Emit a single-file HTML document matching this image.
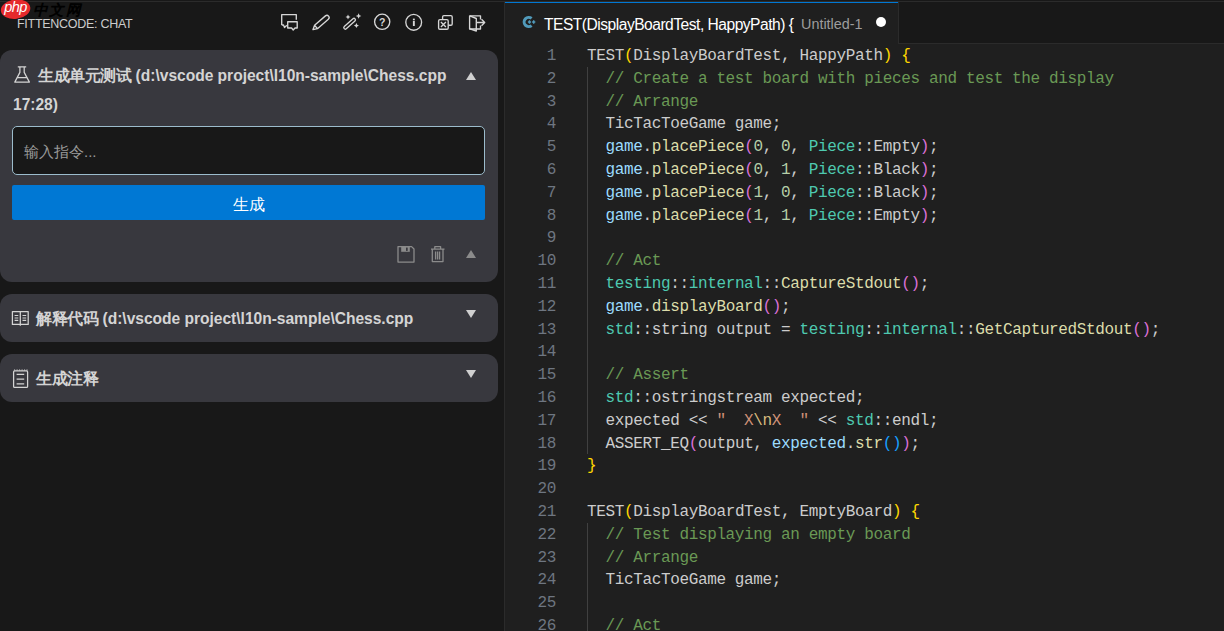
<!DOCTYPE html>
<html><head><meta charset="utf-8">
<style>
*{margin:0;padding:0;box-sizing:border-box}
html,body{width:1224px;height:631px;overflow:hidden;background:#181818}
body{position:relative;font-family:"Liberation Sans",sans-serif}
.abs{position:absolute}
#topline{left:0;top:1px;width:1224px;height:1px;background:#2b2b2b}
#sidebar{left:0;top:0;width:504px;height:631px;background:#181818}
#sbborder{left:504px;top:2px;width:1px;height:629px;background:#2b2b2b}
#hdr{left:17px;top:16.5px;font-size:12.5px;color:#cccccc;white-space:nowrap;letter-spacing:-0.28px}
.ic{position:absolute;top:12px;width:20px;height:20px}
.panel{position:absolute;left:0;width:498px;background:#38383e;border-radius:12px}
.cj{letter-spacing:-0.45px}
.ptitle{position:absolute;left:38px;font-size:15.6px;font-weight:bold;letter-spacing:-0.03px;color:#d4d4d4;white-space:nowrap;line-height:28px}
.tri{position:absolute;width:0;height:0;border-left:5.2px solid transparent;border-right:5.2px solid transparent}
.up{border-bottom:8.5px solid #d0d0d0}
.down{border-top:8.5px solid #d0d0d0}
#input{left:12px;top:126px;width:473px;height:49px;border:1px solid #9cbccc;border-radius:5px;background:#181818}
#ph{left:24px;top:143px;font-size:15px;color:#9a9a9a;white-space:nowrap}
#btn{left:12px;top:185px;width:473px;height:35px;background:#0078d4;border-radius:2px;color:#fff;font-size:15.6px;text-align:center;line-height:35px;padding-top:1.5px}
/* editor */
#editor{left:505px;top:44px;width:719px;height:587px;background:#1f1f1f}
#tabbar{left:505px;top:2px;width:719px;height:42px;background:#181818}
#tabbarb{left:898px;top:43px;width:326px;height:1px;background:#2b2b2b}
#tab{left:505px;top:2px;width:393px;height:42px;background:#1f1f1f;border-top:1px solid #0078d4}
#tabr{left:898px;top:2px;width:1px;height:42px;background:#2b2b2b}
#tabtitle{left:544px;top:15.5px;font-size:15.6px;color:#ffffff;white-space:nowrap;letter-spacing:-0.5px}
#untitled{left:801px;top:16px;font-size:14.4px;color:#9d9d9d;white-space:nowrap}
#dot{left:876px;top:17.2px;width:10px;height:10px;border-radius:50%;background:#ffffff}
#code{left:505px;top:45px;font-family:"Liberation Mono",monospace;font-size:16px;letter-spacing:-0.36px;line-height:22.8px;white-space:pre;color:#cccccc}
.ln{position:absolute;left:0;width:51px;text-align:right;color:#6e7681}
.cl{position:absolute;left:82px}
#guide1{left:587px;top:67px;width:1px;height:387px;background:#404040}
#guide2{left:587px;top:523px;width:1px;height:108px;background:#404040}
.c{color:#6a9955}.f{color:#dcdcaa}.t{color:#4ec9b0}.v{color:#9cdcfe}.n{color:#b5cea8}.s{color:#ce9178}.e{color:#d7ba7d}
.b1{color:#ffd700}.b2{color:#da70d6}.b3{color:#179fff}
</style></head><body>
<div id="sidebar" class="abs"></div>
<div id="topline" class="abs"></div>
<div id="sbborder" class="abs"></div>

<div id="hdr" class="abs">FITTENCODE: CHAT</div>

<!-- panel 1 -->
<div class="panel" style="top:50px;height:232px"></div>
<div class="ptitle" style="top:61.5px"><span class="cj">生成单元测试</span> (d:\vscode project\l10n-sample\Chess.cpp</div>
<div class="ptitle" style="top:91px;left:13px">17:28)</div>
<div class="tri up" style="left:465.6px;top:71.5px"></div>
<div id="input" class="abs"></div>
<div id="ph" class="abs">输入指令...</div>
<div id="btn" class="abs">生成</div>
<div class="tri up" style="left:465.6px;top:249.5px;border-bottom-color:#8b8b8b"></div>

<!-- panel 2 -->
<div class="panel" style="top:294px;height:48px"></div>
<div class="ptitle" style="top:305px;left:36px"><span class="cj">解释代码</span> (d:\vscode project\l10n-sample\Chess.cpp</div>
<div class="tri down" style="left:465.6px;top:310px"></div>

<!-- panel 3 -->
<div class="panel" style="top:354px;height:48px"></div>
<div class="ptitle" style="top:365px;left:36px"><span class="cj">生成注释</span></div>
<div class="tri down" style="left:465.6px;top:370px"></div>

<!-- editor -->
<div id="tabbar" class="abs"></div>
<div id="tabbarb" class="abs"></div>
<div id="editor" class="abs"></div>
<div id="tab" class="abs"></div>
<div id="tabr" class="abs"></div>
<div id="tabtitle" class="abs">TEST(DisplayBoardTest, HappyPath) {</div>
<div id="untitled" class="abs">Untitled-1</div>
<div id="dot" class="abs"></div>

<div id="guide1" class="abs"></div>
<div id="guide2" class="abs"></div>
<div id="code" class="abs">
<div class="ln" style="top:0.0px">1</div><div class="cl" style="top:0.0px">TEST<span class="b1">(</span>DisplayBoardTest, HappyPath<span class="b1">)</span> <span class="b1">{</span></div>
<div class="ln" style="top:22.8px">2</div><div class="cl" style="top:22.8px">  <span class="c">// Create a test board with pieces and test the display</span></div>
<div class="ln" style="top:45.6px">3</div><div class="cl" style="top:45.6px">  <span class="c">// Arrange</span></div>
<div class="ln" style="top:68.4px">4</div><div class="cl" style="top:68.4px">  TicTacToeGame game;</div>
<div class="ln" style="top:91.2px">5</div><div class="cl" style="top:91.2px">  <span class="v">game</span>.<span class="f">placePiece</span><span class="b2">(</span><span class="n">0</span>, <span class="n">0</span>, <span class="t">Piece</span>::Empty<span class="b2">)</span>;</div>
<div class="ln" style="top:114.0px">6</div><div class="cl" style="top:114.0px">  <span class="v">game</span>.<span class="f">placePiece</span><span class="b2">(</span><span class="n">0</span>, <span class="n">1</span>, <span class="t">Piece</span>::Black<span class="b2">)</span>;</div>
<div class="ln" style="top:136.8px">7</div><div class="cl" style="top:136.8px">  <span class="v">game</span>.<span class="f">placePiece</span><span class="b2">(</span><span class="n">1</span>, <span class="n">0</span>, <span class="t">Piece</span>::Black<span class="b2">)</span>;</div>
<div class="ln" style="top:159.6px">8</div><div class="cl" style="top:159.6px">  <span class="v">game</span>.<span class="f">placePiece</span><span class="b2">(</span><span class="n">1</span>, <span class="n">1</span>, <span class="t">Piece</span>::Empty<span class="b2">)</span>;</div>
<div class="ln" style="top:182.4px">9</div><div class="cl" style="top:182.4px"></div>
<div class="ln" style="top:205.2px">10</div><div class="cl" style="top:205.2px">  <span class="c">// Act</span></div>
<div class="ln" style="top:228.0px">11</div><div class="cl" style="top:228.0px">  <span class="t">testing</span>::<span class="t">internal</span>::<span class="f">CaptureStdout</span><span class="b2">()</span>;</div>
<div class="ln" style="top:250.8px">12</div><div class="cl" style="top:250.8px">  <span class="v">game</span>.<span class="f">displayBoard</span><span class="b2">()</span>;</div>
<div class="ln" style="top:273.6px">13</div><div class="cl" style="top:273.6px">  <span class="t">std</span>::string output = <span class="t">testing</span>::<span class="t">internal</span>::<span class="f">GetCapturedStdout</span><span class="b2">()</span>;</div>
<div class="ln" style="top:296.4px">14</div><div class="cl" style="top:296.4px"></div>
<div class="ln" style="top:319.2px">15</div><div class="cl" style="top:319.2px">  <span class="c">// Assert</span></div>
<div class="ln" style="top:342.0px">16</div><div class="cl" style="top:342.0px">  <span class="t">std</span>::ostringstream expected;</div>
<div class="ln" style="top:364.8px">17</div><div class="cl" style="top:364.8px">  expected &lt;&lt; <span class="s">"  X</span><span class="e">\n</span><span class="s">X  "</span> &lt;&lt; <span class="t">std</span>::endl;</div>
<div class="ln" style="top:387.6px">18</div><div class="cl" style="top:387.6px">  ASSERT_EQ<span class="b2">(</span>output, <span class="v">expected</span>.<span class="f">str</span><span class="b3">()</span><span class="b2">)</span>;</div>
<div class="ln" style="top:410.4px">19</div><div class="cl" style="top:410.4px"><span class="b1">}</span></div>
<div class="ln" style="top:433.2px">20</div><div class="cl" style="top:433.2px"></div>
<div class="ln" style="top:456.0px">21</div><div class="cl" style="top:456.0px">TEST<span class="b1">(</span>DisplayBoardTest, EmptyBoard<span class="b1">)</span> <span class="b1">{</span></div>
<div class="ln" style="top:478.8px">22</div><div class="cl" style="top:478.8px">  <span class="c">// Test displaying an empty board</span></div>
<div class="ln" style="top:501.6px">23</div><div class="cl" style="top:501.6px">  <span class="c">// Arrange</span></div>
<div class="ln" style="top:524.4px">24</div><div class="cl" style="top:524.4px">  TicTacToeGame game;</div>
<div class="ln" style="top:547.2px">25</div><div class="cl" style="top:547.2px"></div>
<div class="ln" style="top:570.0px">26</div><div class="cl" style="top:570.0px">  <span class="c">// Act</span></div>
</div><!--codeend-->
<!--icons--><svg class="abs" style="left:0;top:0" width="1224" height="631" viewBox="0 0 1224 631" fill="none" stroke-linejoin="round">
<!-- php logo -->
<g>
<ellipse cx="15.6" cy="9.2" rx="14.8" ry="9.7" fill="#e62a2c" transform="rotate(-7 15.6 9.2)"/>
<text x="4.2" y="12.4" font-family="Liberation Sans" font-style="italic" font-size="14.6" fill="#fff" letter-spacing="-0.6">php</text>
<text x="33" y="14.6" font-size="14.6" fill="#000" stroke="#000" stroke-width="0.7" font-style="italic" letter-spacing="1.3">中文网</text>
</g>
<!-- header icons -->
<g stroke="#d6d6d6" stroke-width="1.35">
 <path d="M281.7 25 V14.6 H296.3 V19.8 M281.7 25 H283.5 L284.5 27.6 L286.8 25.2"/>
 <path d="M287.7 21.7 H297.2 V28 H295 L293.2 30 L291.6 28 H287.7 Z"/>
 <g transform="translate(313,29.6) rotate(-41)">
  <path d="M0 0 L4 -2.2 H18.4 A2.2 2.2 0 0 1 18.4 2.2 H4 Z M4 -2.2 V2.2"/>
 </g>
 <g transform="translate(344.2,28.6) rotate(-42)">
  <rect x="0" y="-1.45" width="14.6" height="2.9" rx="1.45"/>
 </g>
 <circle cx="382.2" cy="21.8" r="7.6"/>
 <circle cx="413.7" cy="22.3" r="7.9"/>
 <rect x="442.6" y="15.6" width="9.6" height="9.6" rx="1.3"/>
 <rect x="438.6" y="19.6" width="9.6" height="9.6" rx="1.3" fill="#181818"/>
 <path d="M440.9 21.9 L445.9 26.9 M445.9 21.9 L440.9 26.9"/>
 <path d="M480.5 19.5 V15.8 H469.6 V29 H480.5 V25.5"/>
 <path d="M469.8 15.9 L476.3 18.5 V31 L469.8 28.9"/>
 <path d="M476.8 22.5 H484.5 M481.5 19.3 L484.7 22.5 L481.5 25.7"/>
</g>
<g fill="#d6d6d6">
 <path d="M348 14.5 L348.8 16.2 L350.5 17 L348.8 17.8 L348 19.5 L347.2 17.8 L345.5 17 L347.2 16.2 Z"/>
 <path d="M358.6 13.3 L359.5 15.2 L361.4 16 L359.5 16.8 L358.6 18.7 L357.7 16.8 L355.8 16 L357.7 15.2 Z"/>
 <path d="M356.4 23.1 L357.2 24.8 L358.9 25.6 L357.2 26.4 L356.4 28.1 L355.6 26.4 L353.9 25.6 L355.6 24.8 Z"/>
 <text x="382.2" y="26" font-family="Liberation Sans" font-weight="bold" font-size="10.5" text-anchor="middle">?</text>
 <rect x="412.9" y="18.6" width="1.9" height="1.7"/>
 <rect x="412.9" y="21" width="1.9" height="5"/>
</g>
<!-- C++ icon -->
<g stroke="#519aba" stroke-width="3" fill="none" transform="translate(0.7,0)">
 <path d="M530.9 18.4 A4.6 4.6 0 1 0 530.9 25.6"/>
</g>
<g stroke="#519aba" stroke-width="1.4">
 <path d="M527.9 22 H531.1 M529.5 20.3 V23.7 M532.1 22 H535.3 M533.7 20.3 V23.7"/>
</g>
<!-- flask -->
<g stroke="#d4d4d4" stroke-width="1.25">
 <path d="M17.8 66.9 H26.2 M19.9 66.9 V72.4 L14.8 82.1 H29.4 L24.2 72.4 V66.9 M17.3 77.5 H26.8"/>
</g>
<!-- book -->
<g stroke="#d4d4d4" stroke-width="1.25">
 <path d="M12.4 311.6 H28.2 V324.4 H12.4 Z M20.3 311.6 V325.8"/>
 <path d="M14.6 315.5 H18.3 M14.6 318 H18.3 M14.6 320.4 H18.3 M22.5 315.5 H26.2 M22.5 318 H26.2 M22.5 320.4 H26.2" stroke-width="1.1"/>
</g>
<!-- notepad -->
<g stroke="#d4d4d4" stroke-width="1.25">
 <rect x="13.6" y="370.9" width="14" height="16.5" rx="1"/>
 <path d="M16.6 374.4 H24.2 M16.6 379.1 H24.2 M16.6 383.8 H24.2" stroke-width="1.2"/>
 <path d="M14.6 369.6 V370.4 M17.1 369.6 V370.4 M19.6 369.6 V370.4 M22.1 369.6 V370.4 M24.6 369.6 V370.4 M27 369.6 V370.4" stroke-width="1.1"/>
</g>
<!-- save / trash -->
<g stroke="#8b8b8b" stroke-width="1.3">
 <path d="M398 246.6 H411.6 L414 249 V262.1 H398 Z"/>
 
 <path d="M431 249.2 H444.5 M434.8 249 V246.7 H440.6 V249 M432.3 249.2 V261.6 H443 V249.2 M435.6 251.5 V259.5 M437.6 251.5 V259.5 M439.6 251.5 V259.5"/>
</g>
<rect x="401.2" y="246.6" width="8.6" height="5.2" fill="#8b8b8b"/><rect x="406" y="247.6" width="1.7" height="3.3" fill="#38383e"/>
</svg><!--iconsend-->
</body></html>
